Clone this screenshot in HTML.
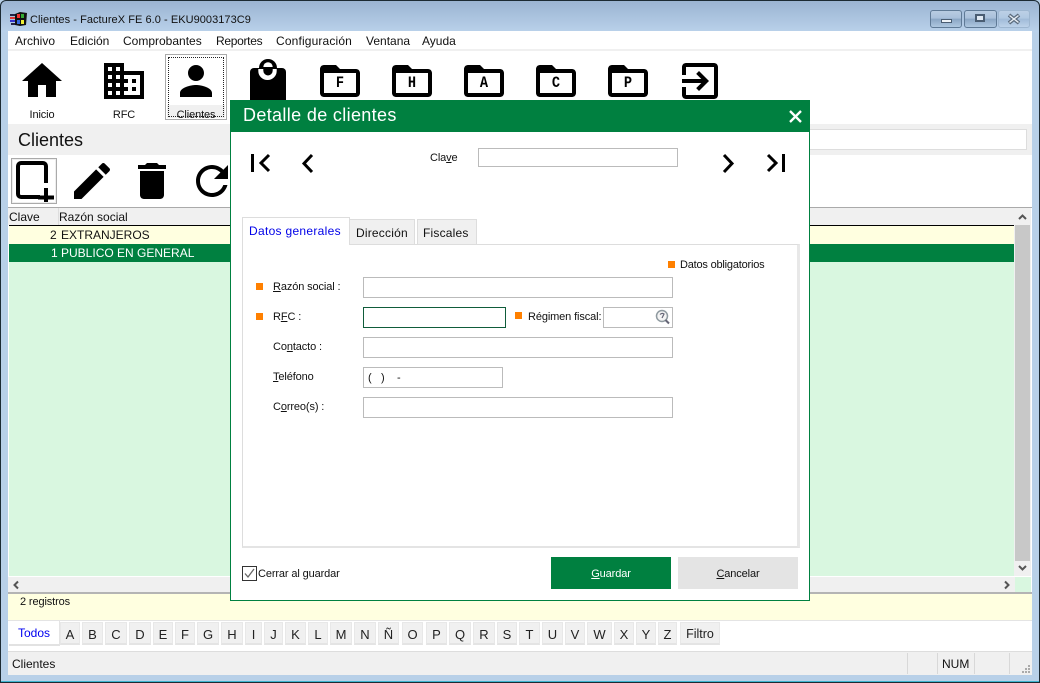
<!DOCTYPE html>
<html><head><meta charset="utf-8"><title>Clientes - FactureX FE 6.0</title>
<style>
html,body{margin:0;padding:0;background:#fff}
#w{position:relative;width:1040px;height:683px;overflow:hidden;background:#b8d0e8;font:12px/16px "Liberation Sans",Arial,sans-serif;color:#111}
#w div,#w span,#w svg{position:absolute}
#w u{position:static}
.t{white-space:nowrap;line-height:16px}
.s{font-size:11px;letter-spacing:-.12px}
.c{text-align:center}
.i{background:#fff;border:1px solid #bbb;box-sizing:border-box}
.sq{background:#ff8000;width:7px;height:7px}
.l{background:#f0f0f0;border:1px solid #e8e8e8;border-bottom:2px solid #e4e4e4;box-sizing:border-box;top:622px;height:23px;line-height:23px;text-align:center;font-size:13px;color:#222}
.m{top:33px}
.fl{font:bold 16px/14px "Liberation Mono",monospace;color:#000;text-align:center;width:40px;transform:scaleX(.85)}
</style></head><body>
<div id="w">
<!-- window chrome -->
<div style="left:0;top:0;width:1040px;height:683px;box-sizing:border-box;border:1px solid #1c2a33;border-radius:6px 6px 0 0;background:linear-gradient(#9bb4d2 0,#b9d1ea 31px,#b8d0e8 32px)"></div>
<div style="left:1px;top:681px;width:1038px;height:1px;background:#3fb4cf"></div>
<!-- app icon -->
<svg style="left:10px;top:12px" width="17" height="14" viewBox="0 0 17 14"><rect x="0" y="2" width="5" height="2" fill="#224"/><rect x="0" y="5" width="5" height="2" fill="#d33"/><rect x="0" y="8" width="5" height="2" fill="#33c"/><rect x="1" y="11" width="4" height="2" fill="#224"/><path d="M5 2 L10 0 L17 1 L16 13 L10 14 L5 13Z" fill="#111"/><rect x="7" y="2" width="3" height="4" fill="#e33"/><rect x="11" y="2" width="3" height="4" fill="#3a3"/><rect x="7" y="8" width="3" height="4" fill="#36d"/><rect x="11" y="8" width="3" height="4" fill="#ee3"/></svg>
<span class="t" style="left:30px;top:12px;color:#111;font-size:11px;letter-spacing:.05px">Clientes - FactureX FE 6.0 - EKU9003173C9</span>
<!-- caption buttons -->
<div style="left:930px;top:10px;width:32px;height:18px;box-sizing:border-box;border:1px solid #5f7a96;border-radius:3px;background:linear-gradient(#b8cce2 0,#a9c0da 45%,#8aa6c4 50%,#aec7e0 100%)"></div>
<div style="left:941px;top:19px;width:11px;height:4px;background:#eef3f8;border:1px solid #4a5d72;box-sizing:border-box"></div>
<div style="left:964px;top:10px;width:33px;height:18px;box-sizing:border-box;border:1px solid #5f7a96;border-radius:3px;background:linear-gradient(#b8cce2 0,#a9c0da 45%,#8aa6c4 50%,#aec7e0 100%)"></div>
<div style="left:975px;top:14px;width:10px;height:8px;background:#dfe8f2;border:2px solid #4a5d72;box-sizing:border-box"></div>
<div style="left:998px;top:10px;width:32px;height:18px;box-sizing:border-box;border:1px solid #9db6d0;border-radius:3px;background:linear-gradient(#bcd0e6 0,#b0c8e2 45%,#a0bbd8 50%,#bdd3ea 100%)"></div>
<svg style="left:1007px;top:13px" width="14" height="12" viewBox="0 0 14 12"><path d="M2 2 L12 10 M12 2 L2 10" stroke="#5a6a7c" stroke-width="3.8"/><path d="M2.5 2.5 L11.5 9.5 M11.5 2.5 L2.500 9.5" stroke="#e6edf4" stroke-width="1.4"/></svg>
<!-- client -->
<div style="left:8px;top:31px;width:1024px;height:644px;background:#fff"></div>
<div style="left:8px;top:49px;width:1024px;height:2px;background:#f0f0f0"></div>
<span class="t m" style="left:15px">Archivo</span>
<span class="t m" style="left:70px">Edición</span>
<span class="t m" style="left:123px">Comprobantes</span>
<span class="t m" style="left:216px;letter-spacing:-.3px">Reportes</span>
<span class="t m" style="left:276px;letter-spacing:.15px">Configuración</span>
<span class="t m" style="left:366px">Ventana</span>
<span class="t m" style="left:422px">Ayuda</span>
<!-- toolbar 1 -->
<svg style="left:18px;top:57px" width="48" height="48" viewBox="0 0 24 24"><path d="M10 20v-6h4v6h5v-8h3L12 3 2 12h3v8z"/></svg>
<span class="t c s" style="left:12px;top:107px;width:60px">Inicio</span>
<svg style="left:100px;top:57px" width="48" height="48" viewBox="0 0 24 24"><path d="M12 7V3H2v18h20V7H12zM6 19H4v-2h2v2zm0-4H4v-2h2v2zm0-4H4V9h2v2zm0-4H4V5h2v2zm4 12H8v-2h2v2zm0-4H8v-2h2v2zm0-4H8V9h2v2zm0-4H8V5h2v2zm10 12h-8v-2h2v-2h-2v-2h2v-2h-2V9h8v10zm-2-8h-2v2h2v-2zm0 4h-2v2h2v-2z"/></svg>
<span class="t c s" style="left:94px;top:107px;width:60px">RFC</span>
<div style="left:165px;top:54px;width:62px;height:66px;box-sizing:border-box;border:1px solid #aaa;background:#fff"></div>
<div style="left:167px;top:105px;width:58px;height:13px;background:#f0f0f0"></div>
<svg style="left:172px;top:57px" width="48" height="48" viewBox="0 0 24 24"><path d="M12 12c2.21 0 4-1.79 4-4s-1.79-4-4-4-4 1.79-4 4 1.79 4 4 4zm0 2c-2.67 0-8 1.34-8 4v2h16v-2c0-2.66-5.33-4-8-4z"/></svg>
<span class="t c s" style="left:166px;top:107px;width:60px;height:11px;overflow:hidden">Clientes</span>
<div style="left:168px;top:57px;width:56px;height:60px;box-sizing:border-box;border:1px dotted #222"></div>
<svg style="left:248px;top:57px" width="40" height="44" viewBox="0 0 40 44"><circle cx="20" cy="11" r="9" fill="#000"/><path d="M2 15a4 4 0 0 1 4-4h28a4 4 0 0 1 4 4v29H2z" fill="#000"/><path d="M15.300 10a4.700 4.700 0 0 1 9.400 0z" fill="#fff"/><path d="M10.300 12h18.400v2a9.200 9 0 0 1-18.400 0z" fill="#fff"/><path d="M15.300 12h9.400v1.500a4.700 5 0 0 1-9.400 0z" fill="#000"/></svg>
<!-- folders -->
<svg style="left:316px;top:57px" width="48" height="48" viewBox="0 0 24 24"><path d="M20 6h-8l-2-2H4c-1.1 0-2 .9-2 2v12c0 1.1.9 2 2 2h16c1.1 0 2-.9 2-2V8c0-1.1-.9-2-2-2zm0 12H4V8h16v10z"/></svg>
<span class="fl" style="left:320px;top:76px">F</span>
<svg style="left:388px;top:57px" width="48" height="48" viewBox="0 0 24 24"><path d="M20 6h-8l-2-2H4c-1.1 0-2 .9-2 2v12c0 1.1.9 2 2 2h16c1.1 0 2-.9 2-2V8c0-1.1-.9-2-2-2zm0 12H4V8h16v10z"/></svg>
<span class="fl" style="left:392px;top:76px">H</span>
<svg style="left:460px;top:57px" width="48" height="48" viewBox="0 0 24 24"><path d="M20 6h-8l-2-2H4c-1.1 0-2 .9-2 2v12c0 1.1.9 2 2 2h16c1.1 0 2-.9 2-2V8c0-1.1-.9-2-2-2zm0 12H4V8h16v10z"/></svg>
<span class="fl" style="left:464px;top:76px">A</span>
<svg style="left:532px;top:57px" width="48" height="48" viewBox="0 0 24 24"><path d="M20 6h-8l-2-2H4c-1.1 0-2 .9-2 2v12c0 1.1.9 2 2 2h16c1.1 0 2-.9 2-2V8c0-1.1-.9-2-2-2zm0 12H4V8h16v10z"/></svg>
<span class="fl" style="left:536px;top:76px">C</span>
<svg style="left:604px;top:57px" width="48" height="48" viewBox="0 0 24 24"><path d="M20 6h-8l-2-2H4c-1.1 0-2 .9-2 2v12c0 1.1.9 2 2 2h16c1.1 0 2-.9 2-2V8c0-1.1-.9-2-2-2zm0 12H4V8h16v10z"/></svg>
<span class="fl" style="left:608px;top:76px">P</span>
<svg style="left:676px;top:57px" width="48" height="48" viewBox="0 0 24 24"><path d="M10.09 15.59L11.5 17l5-5-5-5-1.41 1.41L12.67 11H3v2h9.67l-2.58 2.59zM19 3H5c-1.11 0-2 .9-2 2v4h2V5h14v14H5v-4H3v4c0 1.1.89 2 2 2h14c1.1 0 2-.9 2-2V5c0-1.1-.9-2-2-2z"/></svg>
<!-- title band -->
<div style="left:8px;top:124px;width:1024px;height:31px;background:#f0f0f0"></div>
<span class="t" style="left:18px;top:130px;font-size:18px;line-height:20px;color:#111">Clientes</span>
<div class="i" style="left:790px;top:129px;width:237px;height:21px;border-color:#ddd"></div>
<!-- toolbar 2 -->
<div style="left:11px;top:158px;width:46px;height:46px;box-sizing:border-box;border:1px solid #aaa;box-shadow:inset 0 0 0 1px #eee"></div>
<svg style="left:14px;top:159px" width="42" height="44" viewBox="0 0 42 44"><path d="M26 38H7a3 3 0 0 1-3-3V7a3 3 0 0 1 3-3h22a3 3 0 0 1 3 3v17" fill="none" stroke="#000" stroke-width="4"/><path d="M24 38.500h16M32 29v14" stroke="#000" stroke-width="4"/></svg>
<svg style="left:68px;top:157px" width="48" height="48" viewBox="0 0 24 24"><path d="M3 17.25V21h3.75L17.81 9.94l-3.75-3.75L3 17.25zM20.71 7.04c.39-.39.39-1.02 0-1.41l-2.34-2.34c-.39-.39-1.02-.39-1.41 0l-1.83 1.83 3.75 3.75 1.83-1.83z"/></svg>
<svg style="left:128px;top:157px" width="48" height="48" viewBox="0 0 24 24"><path d="M6 19c0 1.1.9 2 2 2h8c1.1 0 2-.9 2-2V7H6v12zM19 4h-3.5l-1-1h-5l-1 1H5v2h14V4z"/></svg>
<svg style="left:188px;top:157px" width="48" height="48" viewBox="0 0 24 24"><path d="M17.65 6.35C16.2 4.9 14.21 4 12 4c-4.42 0-7.99 3.58-7.99 8s3.57 8 7.99 8c3.73 0 6.84-2.55 7.73-6h-2.08c-.82 2.33-3.04 4-5.65 4-3.31 0-6-2.69-6-6s2.69-6 6-6c1.66 0 3.14.69 4.22 1.78L13 11h7V4l-2.35 2.35z"/></svg>
<!-- grid -->
<div style="left:8px;top:207px;width:1024px;height:1px;background:#aaa"></div>
<div style="left:8px;top:208px;width:1006px;height:17px;background:#f0f0f0"></div>
<div style="left:58px;top:208px;width:1px;height:17px;background:#ddd"></div>
<div style="left:9px;top:225px;width:1005px;height:1px;background:#000"></div>
<span class="t" style="left:9px;top:209px">Clave</span>
<span class="t" style="left:59px;top:209px">Razón social</span>
<div style="left:9px;top:226px;width:1005px;height:350px;background:#d9f7e0"></div>
<div style="left:9px;top:226px;width:1005px;height:18px;background:#ffffe0"></div>
<div style="left:9px;top:244px;width:1005px;height:18px;background:#008040"></div>
<span class="t" style="left:50px;top:227px;color:#111">2</span>
<span class="t" style="left:61px;top:227px;color:#111">EXTRANJEROS</span>
<span class="t" style="left:51px;top:245px;color:#fff">1 PUBLICO EN GENERAL</span>
<!-- vscroll -->
<div style="left:1014px;top:208px;width:17px;height:368px;background:#f0f0f0"></div>
<div style="left:1015px;top:225px;width:15px;height:336px;background:#c8c8c8"></div>
<svg style="left:1017px;top:213px" width="11" height="8" viewBox="0 0 11 8"><path d="M2 6 L5.5 2.5 L9 6" fill="none" stroke="#555" stroke-width="2"/></svg>
<svg style="left:1017px;top:564px" width="11" height="8" viewBox="0 0 11 8"><path d="M2 2 L5.5 5.5 L9 2" fill="none" stroke="#555" stroke-width="2"/></svg>
<!-- hscroll -->
<div style="left:8px;top:577px;width:1007px;height:15px;background:#f0f0f0"></div>
<div style="left:1015px;top:577px;width:16px;height:15px;background:#d9f7e0"></div>
<svg style="left:12px;top:580px" width="8" height="10" viewBox="0 0 8 10"><path d="M6 1.5 L2.5 5 L6 8.5" fill="none" stroke="#555" stroke-width="2"/></svg>
<svg style="left:1003px;top:580px" width="8" height="10" viewBox="0 0 8 10"><path d="M2 1.5 L5.5 5 L2 8.5" fill="none" stroke="#555" stroke-width="2"/></svg>
<div style="left:8px;top:592px;width:1024px;height:2px;background:#b4b4b4"></div>
<!-- registros -->
<div style="left:8px;top:594px;width:1024px;height:26px;background:#ffffe0"></div>
<span class="t s" style="left:20px;top:594px">2 registros</span>
<div style="left:8px;top:620px;width:1024px;height:1px;background:#e4e4e4"></div>
<!-- letters -->
<div style="left:9px;top:620px;width:51px;height:26px;box-sizing:border-box;background:#fff;border:1px solid #e4e4e4;border-left:0;border-bottom:2px solid #e2e2e2"></div>
<span class="t c" style="left:9px;top:625px;width:50px;color:#0000f0">Todos</span>
<span class="l" style="left:60px;width:20px">A</span><span class="l" style="left:82px;width:21px">B</span><span class="l" style="left:105px;width:22px">C</span><span class="l" style="left:129px;width:22px">D</span><span class="l" style="left:153px;width:20px">E</span><span class="l" style="left:175px;width:20px">F</span><span class="l" style="left:197px;width:22px">G</span><span class="l" style="left:221px;width:22px">H</span><span class="l" style="left:245px;width:17px">I</span><span class="l" style="left:264px;width:19px">J</span><span class="l" style="left:285px;width:21px">K</span><span class="l" style="left:308px;width:20px">L</span><span class="l" style="left:330px;width:22px">M</span><span class="l" style="left:354px;width:22px">N</span><span class="l" style="left:378px;width:21px">Ñ</span><span class="l" style="left:402px;width:21px">O</span><span class="l" style="left:426px;width:21px">P</span><span class="l" style="left:449px;width:22px">Q</span><span class="l" style="left:473px;width:22px">R</span><span class="l" style="left:497px;width:20px">S</span><span class="l" style="left:519px;width:21px">T</span><span class="l" style="left:542px;width:21px">U</span><span class="l" style="left:565px;width:20px">V</span><span class="l" style="left:587px;width:25px">W</span><span class="l" style="left:614px;width:20px">X</span><span class="l" style="left:636px;width:20px">Y</span><span class="l" style="left:658px;width:19px">Z</span><span class="l" style="left:680px;width:40px;font-size:12.5px">Filtro</span>
<!-- status bar -->
<div style="left:8px;top:651px;width:1024px;height:24px;background:#f0f0f0;border-top:1px solid #ddd;box-sizing:border-box"></div>
<span class="t" style="left:12px;top:656px">Clientes</span>
<div style="left:907px;top:653px;width:1px;height:21px;background:#d8d8d8"></div>
<div style="left:937px;top:653px;width:1px;height:21px;background:#d8d8d8"></div>
<div style="left:974px;top:653px;width:1px;height:21px;background:#d8d8d8"></div>
<div style="left:1009px;top:653px;width:1px;height:21px;background:#d8d8d8"></div>
<span class="t" style="left:942px;top:656px">NUM</span>
<svg style="left:1021px;top:665px" width="10" height="9" viewBox="0 0 10 9" fill="#aaa"><rect x="7" y="0" width="2" height="2"/><rect x="4" y="3" width="2" height="2"/><rect x="7" y="3" width="2" height="2"/><rect x="1" y="6" width="2" height="2"/><rect x="4" y="6" width="2" height="2"/><rect x="7" y="6" width="2" height="2"/></svg>

<!-- dialog -->
<div style="left:230px;top:100px;width:580px;height:501px;box-sizing:border-box;background:#fff;border:1px solid #008040"></div>
<div style="left:230px;top:100px;width:580px;height:32px;background:#008040"></div>
<span class="t" style="left:243px;top:104px;font-size:18px;line-height:22px;color:#fff;letter-spacing:.35px">Detalle de clientes</span>
<svg style="left:788px;top:109px" width="15" height="15" viewBox="0 0 15 15"><path d="M2 2 L13 13 M13 2 L2 13" stroke="#fff" stroke-width="2.3"/></svg>
<!-- nav -->
<svg style="left:249px;top:152px" width="24" height="22" viewBox="0 0 24 22"><rect x="2" y="2" width="3" height="18" fill="#000"/><path d="M20 3 L12 11 L20 19" fill="none" stroke="#000" stroke-width="3"/></svg>
<svg style="left:299px;top:152px" width="16" height="22" viewBox="0 0 16 22"><path d="M13 3 L5 11.500 L13 20" fill="none" stroke="#000" stroke-width="3"/></svg>
<svg style="left:719px;top:152px" width="16" height="22" viewBox="0 0 16 22"><path d="M5 3 L13 11.500 L5 20" fill="none" stroke="#000" stroke-width="3"/></svg>
<svg style="left:764px;top:152px" width="24" height="22" viewBox="0 0 24 22"><rect x="18" y="2" width="3" height="18" fill="#000"/><path d="M4 3 L12 11 L4 19" fill="none" stroke="#000" stroke-width="3"/></svg>
<span class="t s" style="left:430px;top:150px">Cla<u>v</u>e</span>
<div class="i" style="left:478px;top:148px;width:200px;height:19px"></div>
<!-- panel + tabs -->
<div style="left:242px;top:244px;width:558px;height:304px;box-sizing:border-box;background:#fff;border:1px solid #ddd;border-right:3px solid #e8e8e8;border-bottom:2px solid #e4e4e4"></div>
<div style="left:349px;top:219px;width:66px;height:26px;box-sizing:border-box;background:#f0f0f0;border:1px solid #ddd"></div>
<div style="left:417px;top:219px;width:60px;height:26px;box-sizing:border-box;background:#f0f0f0;border:1px solid #ddd"></div>
<div style="left:242px;top:217px;width:108px;height:28px;box-sizing:border-box;background:#fff;border:1px solid #ddd;border-bottom:0"></div>
<span class="t" style="left:249px;top:223px;color:#0000e8;letter-spacing:.3px">Datos generales</span>
<span class="t" style="left:356px;top:225px;letter-spacing:.2px">Dirección</span>
<span class="t" style="left:423px;top:225px;letter-spacing:.2px">Fiscales</span>
<div class="sq" style="left:668px;top:261px"></div>
<span class="t s" style="left:680px;top:257px;letter-spacing:-.2px">Datos obligatorios</span>
<div class="sq" style="left:256px;top:283px"></div>
<div class="sq" style="left:256px;top:313px"></div>
<div class="sq" style="left:515px;top:312px"></div>
<span class="t s" style="left:273px;top:279px"><u>R</u>azón social :</span>
<span class="t s" style="left:273px;top:309px">R<u>F</u>C :</span>
<span class="t s" style="left:273px;top:339px">Co<u>n</u>tacto :</span>
<span class="t s" style="left:273px;top:369px"><u>T</u>eléfono</span>
<span class="t s" style="left:273px;top:399px">C<u>o</u>rreo(s) :</span>
<span class="t s" style="left:528px;top:309px">Régimen fiscal:</span>
<div class="i" style="left:363px;top:277px;width:310px;height:21px"></div>
<div class="i" style="left:363px;top:307px;width:143px;height:21px;border-color:#0f5c3a"></div>
<div class="i" style="left:603px;top:307px;width:70px;height:21px"></div>
<div class="i" style="left:363px;top:337px;width:310px;height:21px"></div>
<div class="i" style="left:363px;top:367px;width:140px;height:21px"></div>
<div class="i" style="left:363px;top:397px;width:310px;height:21px"></div>
<span class="t s" style="left:368px;top:370px">(</span>
<span class="t s" style="left:381px;top:370px">)</span>
<span class="t s" style="left:397px;top:370px">-</span>
<svg style="left:654px;top:309px" width="17" height="16" viewBox="0 0 17 16"><circle cx="8" cy="7" r="5.5" fill="#f4f4f4" stroke="#8f9aa0" stroke-width="1.5"/><path d="M6 5.500 Q8 3.500 10 5 L8 9" fill="none" stroke="#667" stroke-width="1.200"/><path d="M11.500 11 L15 14.500" stroke="#667" stroke-width="2"/></svg>
<!-- footer -->
<div style="left:242px;top:566px;width:15px;height:15px;box-sizing:border-box;background:#fff;border:1px solid #333"></div>
<svg style="left:243px;top:567px" width="13" height="13" viewBox="0 0 13 13"><path d="M2 6.500 L5 10 L11 2" fill="none" stroke="#666" stroke-width="1.300"/></svg>
<span class="t s" style="left:258px;top:566px">Cerrar al guardar</span>
<div style="left:551px;top:557px;width:120px;height:32px;background:#008040"></div>
<span class="t c s" style="left:551px;top:566px;width:120px;color:#fff"><u>G</u>uardar</span>
<div style="left:678px;top:557px;width:120px;height:32px;background:#e4e4e4"></div>
<span class="t c s" style="left:678px;top:566px;width:120px"><u>C</u>ancelar</span>
</div>
</body></html>
